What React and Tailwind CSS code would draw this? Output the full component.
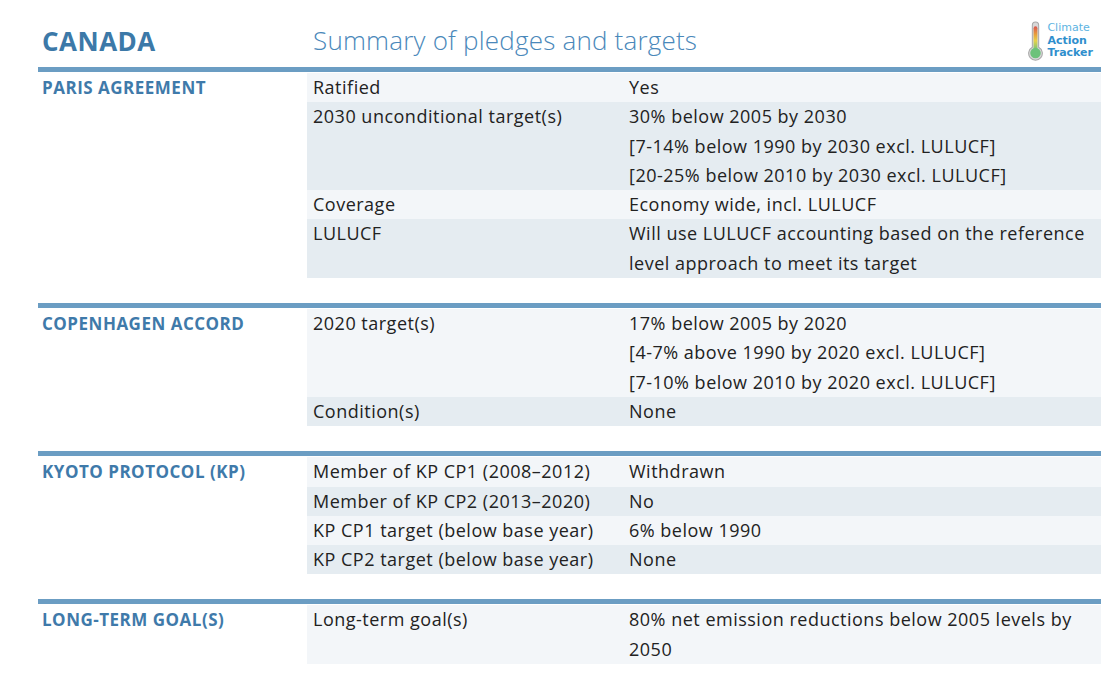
import React from "react";

const sections = [
  {
    title: "Paris Agreement",
    rows: [
      { label: "Ratified", value: ["Yes"] },
      {
        label: "2030 unconditional target(s)",
        value: [
          "30% below 2005 by 2030",
          "[7-14% below 1990 by 2030 excl. LULUCF]",
          "[20-25% below 2010 by 2030 excl. LULUCF]",
        ],
      },
      { label: "Coverage", value: ["Economy wide, incl. LULUCF"] },
      {
        label: "LULUCF",
        value: [
          "Will use LULUCF accounting based on the reference",
          "level approach to meet its target",
        ],
      },
    ],
  },
  {
    title: "Copenhagen Accord",
    rows: [
      {
        label: "2020 target(s)",
        value: [
          "17% below 2005 by 2020",
          "[4-7% above 1990 by 2020 excl. LULUCF]",
          "[7-10% below 2010 by 2020 excl. LULUCF]",
        ],
      },
      { label: "Condition(s)", value: ["None"] },
    ],
  },
  {
    title: "Kyoto Protocol (KP)",
    rows: [
      { label: "Member of KP CP1 (2008–2012)", value: ["Withdrawn"] },
      { label: "Member of KP CP2 (2013–2020)", value: ["No"] },
      { label: "KP CP1 target (below base year)", value: ["6% below 1990"] },
      { label: "KP CP2 target (below base year)", value: ["None"] },
    ],
  },
  {
    title: "Long-term goal(s)",
    rows: [
      {
        label: "Long-term goal(s)",
        value: ["80% net emission reductions below 2005 levels by", "2050"],
      },
    ],
  },
];

function Logo() {
  return (
    <div className="flex items-center gap-[4px]">
      <svg width="15" height="40" viewBox="0 0 14 38">
        <defs>
          <linearGradient id="therm" x1="0" y1="0" x2="0" y2="1">
            <stop offset="0" stopColor="#d9534f" />
            <stop offset="0.35" stopColor="#e8a23a" />
            <stop offset="0.6" stopColor="#e6d24a" />
            <stop offset="1" stopColor="#6cc27a" />
          </linearGradient>
        </defs>
        <path
          d="M4 4 a3 3 0 0 1 6 0 V25 a6.5 6.5 0 1 1 -6 0 Z"
          fill="#d8d8d8"
          stroke="#a9a9a9"
          strokeWidth="1"
        />
        <rect x="5.2" y="5" width="3.6" height="23" rx="1.8" fill="url(#therm)" />
        <circle cx="7" cy="30.5" r="5" fill="#6cc27a" />
      </svg>
      <div className="flex flex-col text-[11px] leading-[12.5px] font-['DejaVu_Sans',sans-serif]">
        <span className="text-[#5db4e2]">Climate</span>
        <span className="font-bold text-[#2f8fcd]">Action</span>
        <span className="font-bold text-[#2f8fcd]">Tracker</span>
      </div>
    </div>
  );
}

export default function App() {
  return (
    <div className="w-[1115px] h-[691px] bg-white font-['Open_Sans',sans-serif] text-[#222]">
      <div className="ml-[38px] w-[1063px]">
        <div className="flex items-center h-[67px]">
          <div className="w-[269px] pl-[4px] pt-[16px] text-[26px] tracking-[0.5px] font-bold text-[#3c79a8]">
            CANADA
          </div>
          <div className="pl-[6px] pt-[14px] text-[26px] tracking-[0.2px] font-light text-[#4a88ba]">
            Summary of pledges and targets
          </div>
          <div className="ml-auto mr-[8px] pt-[15px]">
            <Logo />
          </div>
        </div>

        {sections.map((section, si) => (
          <div
            key={section.title}
            className={"border-t-[5px] border-[#6b9dc3] flex pt-[1px] " + (si > 0 ? "mt-[25px]" : "")}
          >
            <div className="w-[269px] pl-[4px] text-[17px] tracking-[0.5px] leading-[29px] font-bold uppercase text-[#3f7aaa]">
              {section.title}
            </div>
            <div className="flex-1 text-[18px] tracking-[0.5px] leading-[29.3px]">
              {section.rows.map((row, ri) => (
                <div
                  key={row.label}
                  className={
                    "grid grid-cols-[316px_1fr] " +
                    (ri % 2 === 0 ? "bg-[#f3f6f9]" : "bg-[#e5ecf1]")
                  }
                >
                  <div className="pl-[6px]">{row.label}</div>
                  <div className="pl-[6px]">
                    {row.value.map((line) => (
                      <div key={line} className="whitespace-nowrap">
                        {line}
                      </div>
                    ))}
                  </div>
                </div>
              ))}
            </div>
          </div>
        ))}
      </div>
    </div>
  );
}
